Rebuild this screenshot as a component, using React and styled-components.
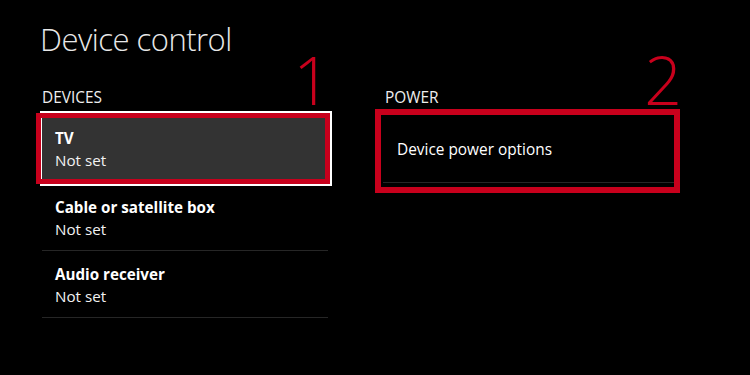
import React from 'react';
import styled, { createGlobalStyle } from 'styled-components';

const Global = createGlobalStyle`
    html, body {
        margin: 0;
        padding: 0;
        background: #000;
    }
    body {
        font-family: "Open Sans", "Noto Sans", "Liberation Sans", sans-serif;
        color: #fff;
    }
`;

const devices = [
    { name: 'TV', value: 'Not set', focused: true },
    { name: 'Cable or satellite box', value: 'Not set' },
    { name: 'Audio receiver', value: 'Not set' },
];

const App = () => {
    return <Page>
        <Global />
        <Title>Device control</Title>
        <Columns>
            <Section>
                <Label>Devices</Label>
                {devices.map((d) => (
                    <Item key={d.name} focused={d.focused}>
                        <ItemName>{d.name}</ItemName>
                        <ItemValue>{d.value}</ItemValue>
                        {d.focused && <Mark $top={0} $left={-6} $right={0} $bottom={0} />}
                    </Item>
                ))}
                <Number $right={1}>1</Number>
            </Section>
            <Section>
                <Label>Power</Label>
                <PowerItem>
                    Device power options
                    <Mark $top={-2} $left={-8} $right={-5} $bottom={-11} $thick={6} />
                </PowerItem>
                <Number $right={-7}>2</Number>
            </Section>
        </Columns>
    </Page>
}

export default App;

const Page = styled.div`
    width: 750px;
    height: 375px;
    box-sizing: border-box;
    padding: 17px 0 0 40px;
    background: #000;
    overflow: hidden;
`;

const Title = styled.h1`
    margin: 0;
    font-size: 31px;
    font-weight: 300;
    line-height: 44px;
    color: #e8e8e8;
    letter-spacing: -0.5px;
`;

const Columns = styled.div`
    display: flex;
    gap: 51px;
    margin-top: 25px;
`;

const Section = styled.div`
    position: relative;
    width: 292px;
    display: flex;
    flex-direction: column;
`;

const Label = styled.div`
    font-size: 15.4px;
    line-height: 20px;
    text-transform: uppercase;
    color: #eee;
    padding: 2px 0 0 2px;
    margin-bottom: 3px;
`;

const Item = styled.div`
    position: relative;
    z-index: ${p => p.focused ? 1 : 0};
    display: flex;
    flex-direction: column;
    box-sizing: border-box;
    height: ${p => p.focused ? '75px' : '67px'};
    padding: ${p => p.focused ? '15px 0 0 13px' : '13px 0 0 13px'};
    margin: ${p => p.focused ? '0 0 -2px 0' : '0 4px 0 2px'};
    background: ${p => p.focused ? '#333' : 'transparent'};
    border: ${p => p.focused ? '2px solid #fff' : 'none'};
    border-bottom: ${p => p.focused ? '2px solid #fff' : '1px solid #262626'};
`;

const ItemName = styled.div`
    font-size: 15.2px;
    line-height: 20px;
    font-weight: 700;
    color: #fff;
`;

const ItemValue = styled.div`
    font-size: 15.2px;
    line-height: 20px;
    color: #f2f2f2;
    margin-top: 2px;
`;

const PowerItem = styled.div`
    position: relative;
    height: 72px;
    display: flex;
    align-items: center;
    box-sizing: border-box;
    padding: 6px 0 0 14px;
    font-size: 15.4px;
    color: #fff;
    border-bottom: 1px solid #262626;
`;

const Mark = styled.div`
    position: absolute;
    top: ${p => p.$top}px;
    left: ${p => p.$left}px;
    right: ${p => p.$right}px;
    bottom: ${p => p.$bottom}px;
    border: ${p => p.$thick || 5}px solid #c8001c;
    pointer-events: none;
`;

const Number = styled.div`
    position: absolute;
    top: -40px;
    right: ${p => p.$right}px;
    font-size: 66px;
    font-weight: 300;
    line-height: 66px;
    color: #c8001c;
`;
